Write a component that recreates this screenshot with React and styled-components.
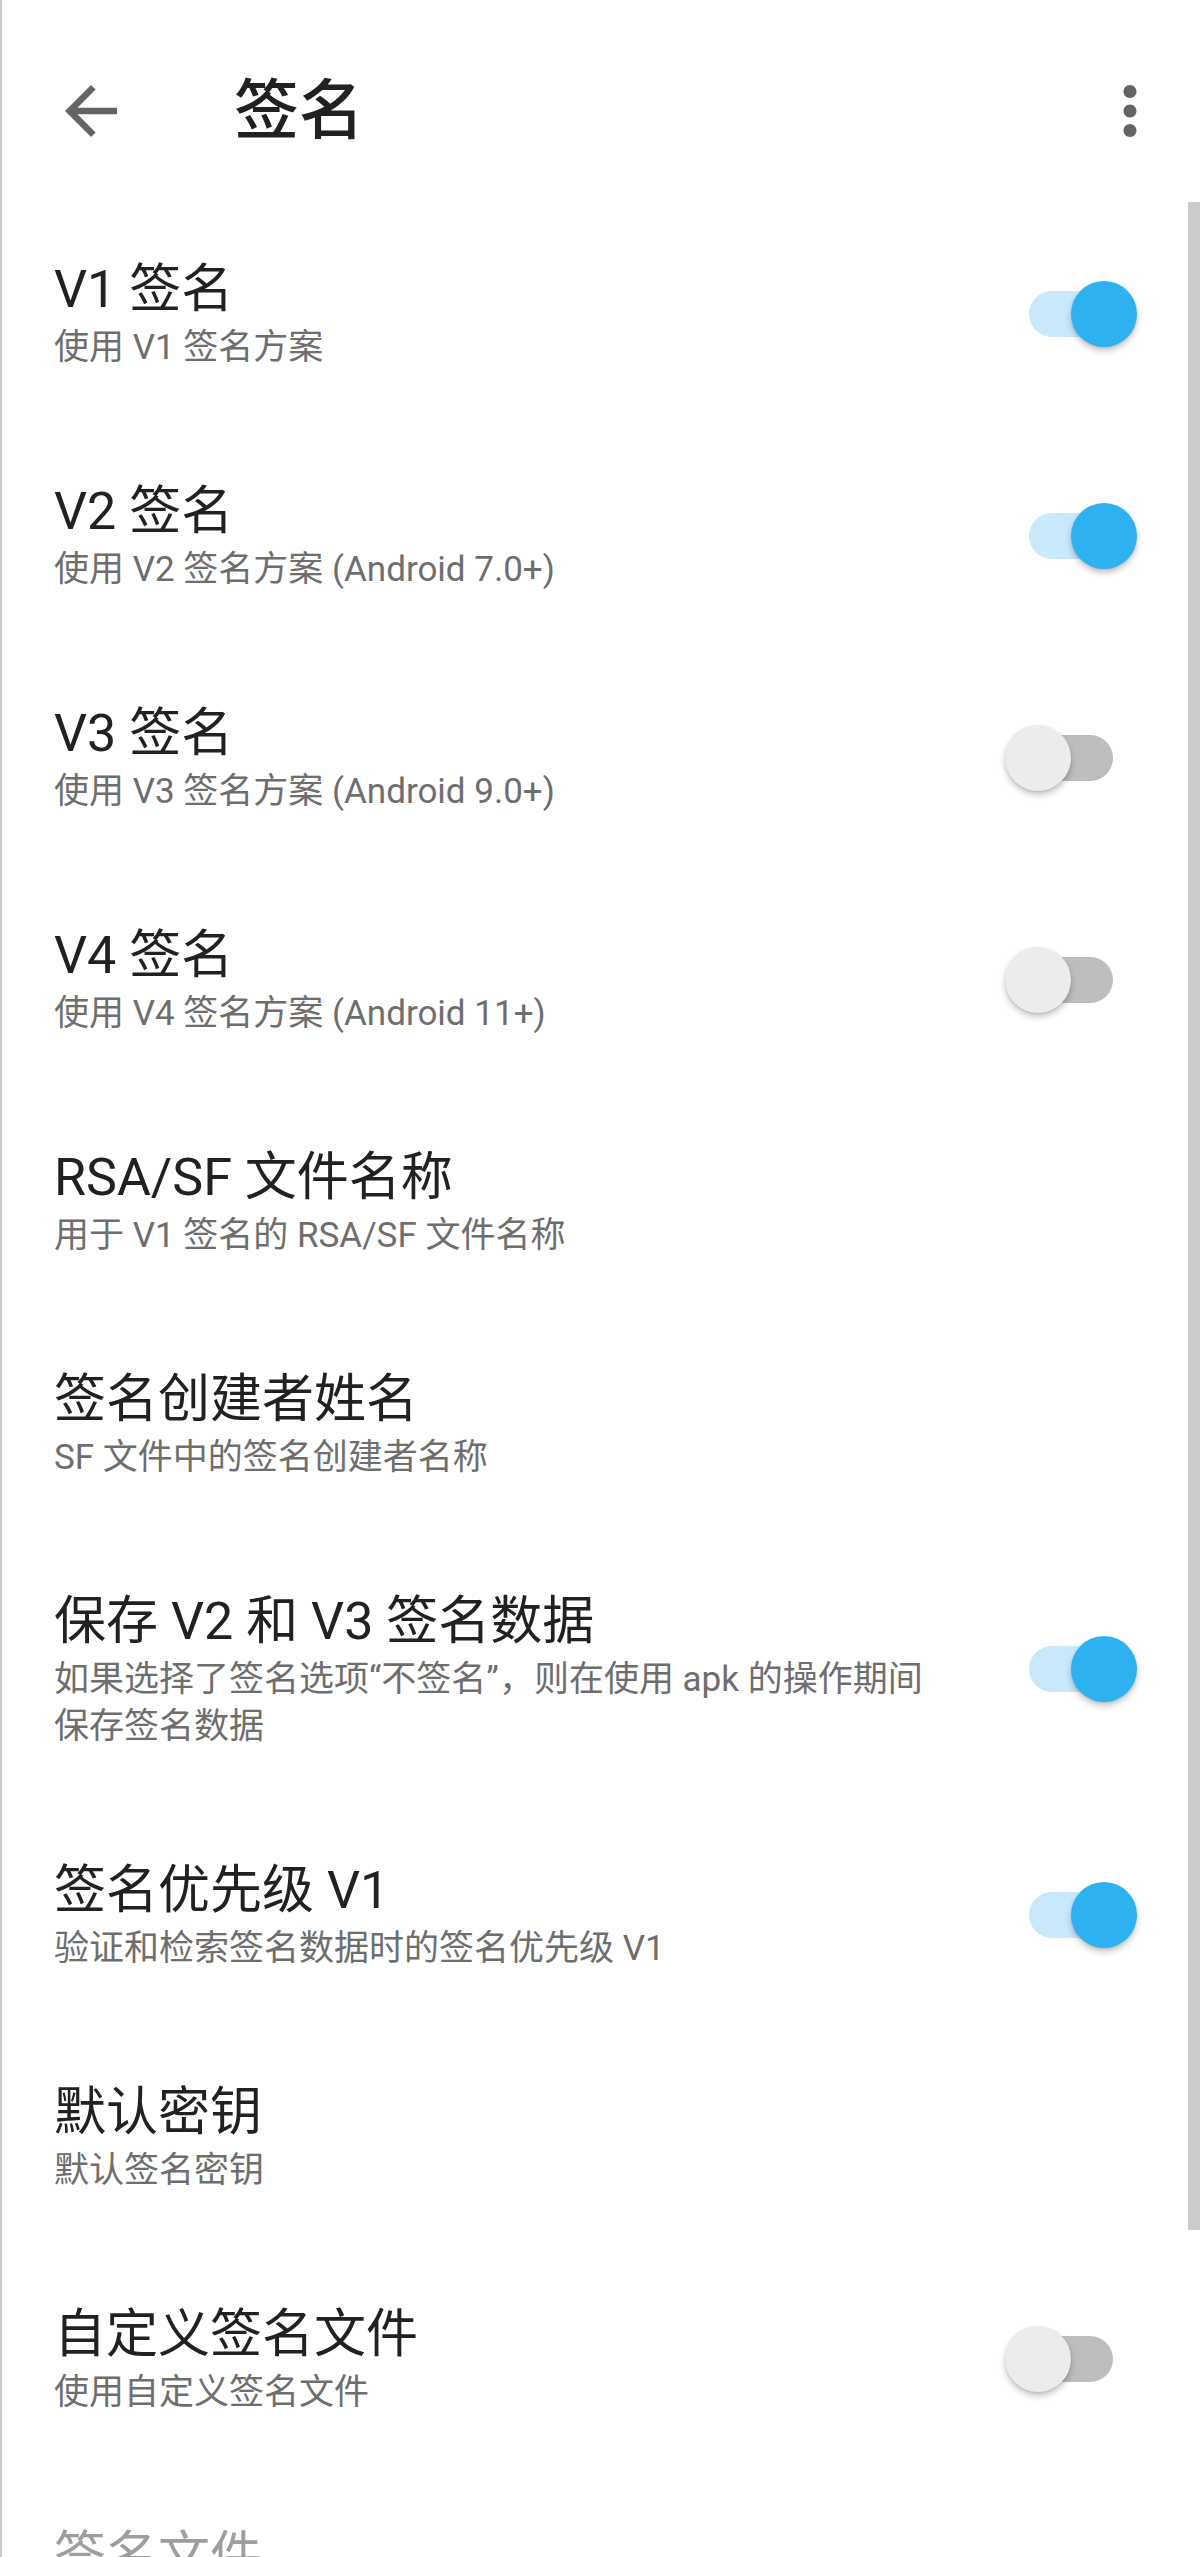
import React from "react";
import styled, { createGlobalStyle } from "styled-components";

const GlobalStyle = createGlobalStyle`
  html, body {
    margin: 0;
    padding: 0;
    background: #ffffff;
  }
  body {
    font-family: Roboto, "Noto Sans CJK SC", "Noto Sans", sans-serif;
    -webkit-font-smoothing: antialiased;
  }
`;

const Screen = styled.div`
  position: relative;
  width: 1200px;
  height: 2557px;
  overflow: hidden;
  box-sizing: border-box;
  border-left: 2px solid #c9c9c9;
  background: #ffffff;
  display: flex;
  flex-direction: column;
`;

const AppBar = styled.header`
  display: flex;
  align-items: center;
  height: 182px;
  margin-top: 20px;
  flex-shrink: 0;
`;

const IconButton = styled.div`
  width: 78px;
  height: 78px;
  display: flex;
  align-items: center;
  justify-content: center;
  margin-left: ${(p) => p.$left || 0}px;
  margin-right: ${(p) => p.$right || 0}px;
  color: #646464;
  svg {
    width: 78px;
    height: 78px;
    fill: currentColor;
  }
`;

const Title = styled.h1`
  margin: 0 0 0 104px;
  font-size: 65px;
  font-weight: 500;
  color: #212121;
  line-height: 1;
  flex: 1;
`;

const List = styled.div`
  display: flex;
  flex-direction: column;
`;

const Item = styled.div`
  display: flex;
  align-items: center;
  padding: 54px 63px 53px 52px;
`;

const Texts = styled.div`
  flex: 1;
  min-width: 0;
  padding-right: 40px;
`;

const ItemTitle = styled.div`
  font-size: 52px;
  line-height: 68px;
  color: ${(p) => (p.$disabled ? "#9e9e9e" : "#212121")};
  white-space: nowrap;
`;

const ItemSummary = styled.div`
  font-size: 35px;
  line-height: 47px;
  color: #6e6e6e;
  white-space: pre-line;
`;

const SwitchBox = styled.div`
  position: relative;
  width: 132px;
  height: 66px;
  flex-shrink: 0;
`;

const Track = styled.div`
  position: absolute;
  left: 24px;
  top: 10px;
  width: 84px;
  height: 46px;
  border-radius: 23px;
  background: ${(p) => (p.$on ? "#c8e9fb" : "#bdbdbd")};
`;

const Thumb = styled.div`
  position: absolute;
  top: 0;
  left: ${(p) => (p.$on ? 66 : 0)}px;
  width: 66px;
  height: 66px;
  border-radius: 50%;
  background: ${(p) => (p.$on ? "#2eb1f1" : "#ececec")};
  box-shadow: 0 4px 6px rgba(0, 0, 0, 0.22), 0 1px 2px rgba(0, 0, 0, 0.1);
`;

const ScrollThumb = styled.div`
  position: absolute;
  right: 0;
  top: 202px;
  width: 12px;
  height: 2028px;
  background: #cbcbcb;
`;

const Switch = ({ on }) => (
  <SwitchBox>
    <Track $on={on} />
    <Thumb $on={on} />
  </SwitchBox>
);

const items = [
  { title: "V1 签名", summary: "使用 V1 签名方案", sw: true },
  { title: "V2 签名", summary: "使用 V2 签名方案 (Android 7.0+)", sw: true },
  { title: "V3 签名", summary: "使用 V3 签名方案 (Android 9.0+)", sw: false },
  { title: "V4 签名", summary: "使用 V4 签名方案 (Android 11+)", sw: false },
  { title: "RSA/SF 文件名称", summary: "用于 V1 签名的 RSA/SF 文件名称" },
  { title: "签名创建者姓名", summary: "SF 文件中的签名创建者名称" },
  {
    title: "保存 V2 和 V3 签名数据",
    summary: "如果选择了签名选项“不签名”，则在使用 apk 的操作期间\n保存签名数据",
    sw: true,
  },
  { title: "签名优先级 V1", summary: "验证和检索签名数据时的签名优先级 V1", sw: true },
  { title: "默认密钥", summary: "默认签名密钥" },
  { title: "自定义签名文件", summary: "使用自定义签名文件", sw: false },
  { title: "签名文件", summary: "", disabled: true },
];

export default function App() {
  return (
    <>
      <GlobalStyle />
      <Screen>
        <AppBar>
          <IconButton $left={50}>
            <svg viewBox="0 0 24 24">
              <path d="M20 11H7.83l5.59-5.59L12 4l-8 8 8 8 1.41-1.41L7.83 13H20v-2z" />
            </svg>
          </IconButton>
          <Title>签名</Title>
          <IconButton $right={31}>
            <svg viewBox="0 0 24 24">
              <path d="M12 8c1.1 0 2-.9 2-2s-.9-2-2-2-2 .9-2 2 .9 2 2 2zm0 2c-1.1 0-2 .9-2 2s.9 2 2 2 2-.9 2-2-.9-2-2-2zm0 6c-1.1 0-2 .9-2 2s.9 2 2 2 2-.9 2-2-.9-2-2-2z" />
            </svg>
          </IconButton>
        </AppBar>
        <List>
          {items.map((it) => (
            <Item key={it.title}>
              <Texts>
                <ItemTitle $disabled={it.disabled}>{it.title}</ItemTitle>
                {it.summary && <ItemSummary>{it.summary}</ItemSummary>}
              </Texts>
              {it.sw !== undefined && <Switch on={it.sw} />}
            </Item>
          ))}
        </List>
        <ScrollThumb />
      </Screen>
    </>
  );
}
